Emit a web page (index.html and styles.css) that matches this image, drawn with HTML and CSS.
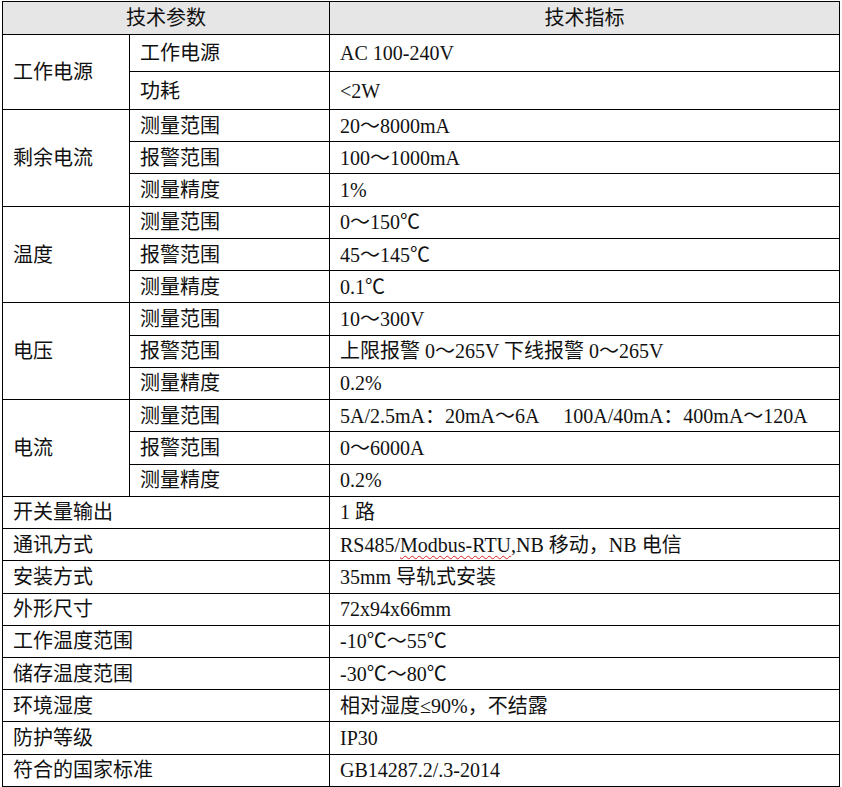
FILE: index.html
```html
<!DOCTYPE html>
<html lang="zh-CN">
<head>
<meta charset="utf-8">
<title>技术参数</title>
<link rel="stylesheet" href="styles.css">
</head>
<body>
<table class="spec">
  <colgroup>
    <col class="c1"><col class="c2"><col class="c3">
  </colgroup>
  <thead>
    <tr class="head">
      <th colspan="2">技术参数</th>
      <th>技术指标</th>
    </tr>
  </thead>
  <tbody>
    <tr class="tall"><td rowspan="2">工作电源</td><td>工作电源</td><td>AC 100-240V</td></tr>
    <tr class="tall2"><td>功耗</td><td>&lt;2W</td></tr>

    <tr><td rowspan="3">剩余电流</td><td>测量范围</td><td>20～8000mA</td></tr>
    <tr><td>报警范围</td><td>100～1000mA</td></tr>
    <tr><td>测量精度</td><td>1%</td></tr>

    <tr><td rowspan="3">温度</td><td>测量范围</td><td>0～150℃</td></tr>
    <tr><td>报警范围</td><td>45～145℃</td></tr>
    <tr><td>测量精度</td><td>0.1℃</td></tr>

    <tr><td rowspan="3">电压</td><td>测量范围</td><td>10～300V</td></tr>
    <tr><td>报警范围</td><td>上限报警 0～265V 下线报警 0～265V</td></tr>
    <tr><td>测量精度</td><td>0.2%</td></tr>

    <tr><td rowspan="3">电流</td><td>测量范围</td><td class="pre">5A/2.5mA：20mA～6A     100A/40mA：400mA～120A</td></tr>
    <tr><td>报警范围</td><td>0～6000A</td></tr>
    <tr><td>测量精度</td><td>0.2%</td></tr>

    <tr><td colspan="2">开关量输出</td><td>1 路</td></tr>
    <tr><td colspan="2">通讯方式</td><td>RS485/<span class="squiggle">Modbus-RTU</span>,NB 移动，NB 电信</td></tr>
    <tr><td colspan="2">安装方式</td><td>35mm 导轨式安装</td></tr>
    <tr><td colspan="2">外形尺寸</td><td>72x94x66mm</td></tr>
    <tr><td colspan="2">工作温度范围</td><td>-10℃～55℃</td></tr>
    <tr><td colspan="2">储存温度范围</td><td>-30℃～80℃</td></tr>
    <tr><td colspan="2">环境湿度</td><td>相对湿度≤90%，不结露</td></tr>
    <tr><td colspan="2">防护等级</td><td>IP30</td></tr>
    <tr><td colspan="2">符合的国家标准</td><td>GB14287.2/.3-2014</td></tr>
  </tbody>
</table>
</body>
</html>
```

FILE: styles.css
```css
html, body {
  margin: 0;
  padding: 0;
  background: #ffffff;
}

body {
  padding: 1px 0 0 2px;
}

.spec {
  border-collapse: collapse;
  table-layout: fixed;
  width: 837px;
  font-family: "Liberation Serif", "Noto Sans CJK SC", serif;
  font-size: 20px;
  color: #111111;
}

.c1 { width: 127px; }
.c2 { width: 200px; }
.c3 { width: 510px; }

.spec th,
.spec td {
  border: 1px solid #000;
  padding: 0 0 0 10px;
  text-align: left;
  vertical-align: middle;
  white-space: nowrap;
  line-height: 1;
}

.spec th {
  background: #e7e6e6;
  font-weight: normal;
  text-align: center;
  padding: 0;
}

.head { height: 33px; }
.spec tbody tr { height: 32.24px; }
.spec tbody tr.tall { height: 37px; }
.spec tbody tr.tall2 { height: 38px; }

.spec td.pre { white-space: pre; }

.squiggle {
  text-decoration: underline wavy #e02020;
  text-decoration-thickness: 1px;
  text-underline-offset: 3px;
}
```
